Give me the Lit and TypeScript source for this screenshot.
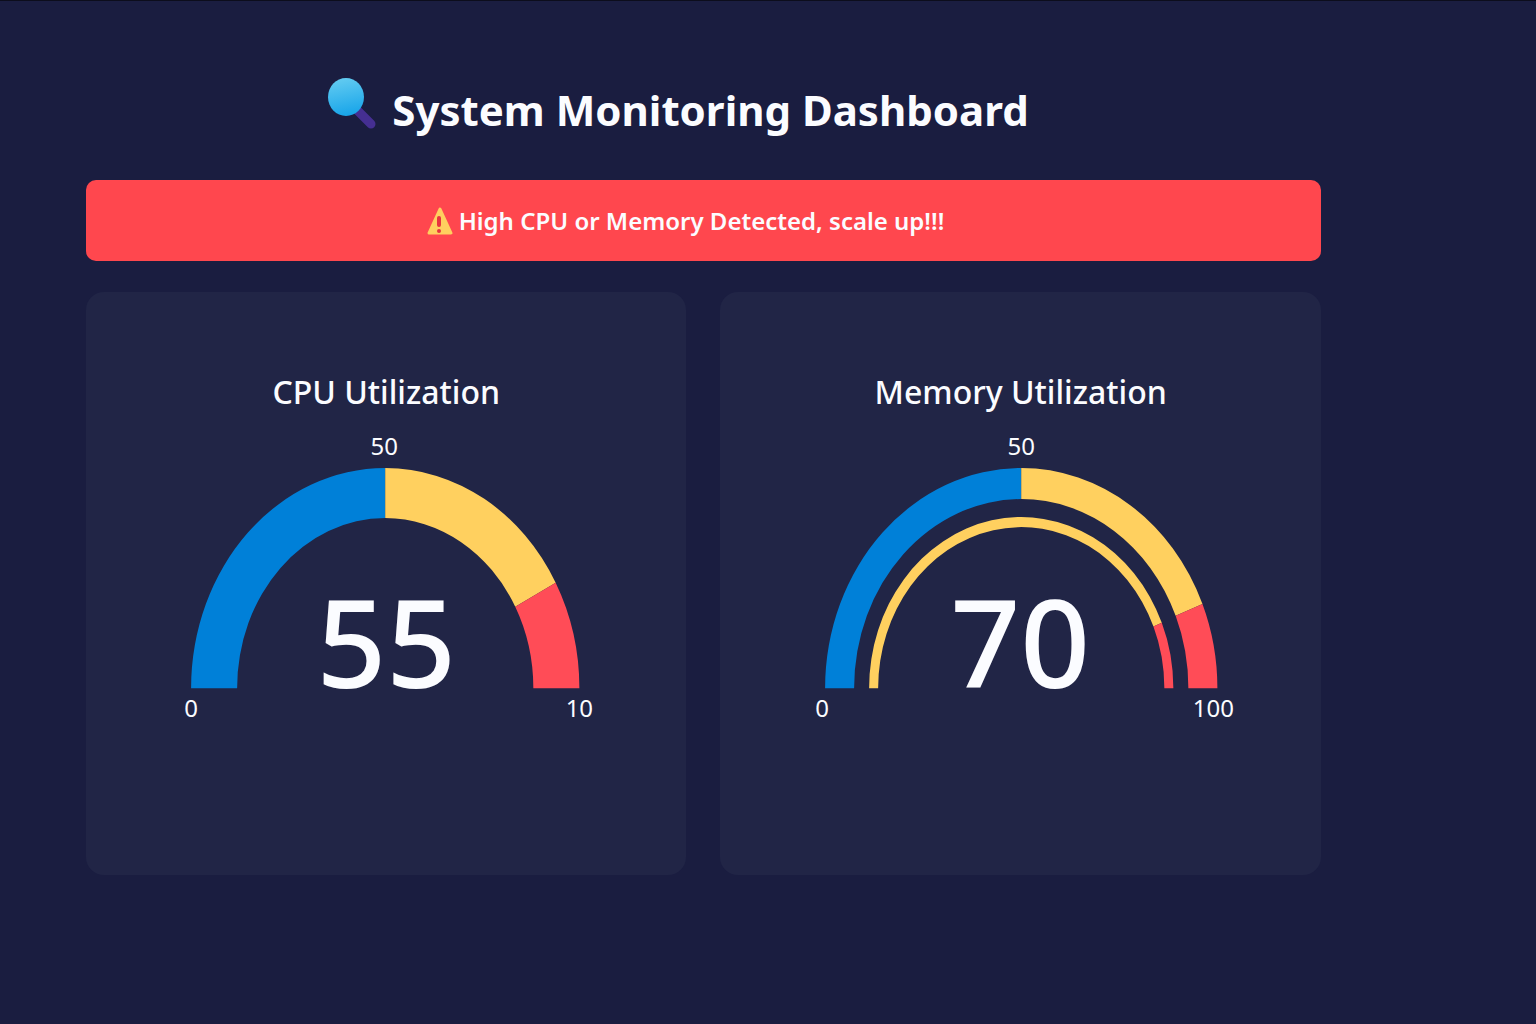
import { LitElement, html, svg, css } from "lit";
import { customElement, property } from "lit/decorators.js";

interface Zone {
  upTo: number;
  tone: "low" | "mid" | "high";
}

interface Ring {
  outer: [number, number];
  inner: [number, number];
  zones: Zone[];
}

interface Label {
  text: string;
  x: number;
  y: number;
}

interface Gauge {
  title: string;
  value: number;
  cx: number;
  rings: Ring[];
  labels: Label[];
}

const BASELINE = 260;

const GAUGES: Gauge[] = [
  {
    title: "CPU Utilization",
    value: 55,
    cx: 299,
    rings: [
      {
        outer: [194, 220],
        inner: [148, 170],
        zones: [
          { upTo: 0.5, tone: "low" },
          { upTo: 0.841, tone: "mid" },
          { upTo: 1, tone: "high" },
        ],
      },
    ],
    labels: [
      { text: "50", x: 298, y: 27 },
      { text: "0", x: 105, y: 289 },
      { text: "10", x: 493, y: 289 },
    ],
  },
  {
    title: "Memory Utilization",
    value: 70,
    cx: 301,
    rings: [
      {
        outer: [196, 220],
        inner: [167, 189],
        zones: [
          { upTo: 0.5, tone: "low" },
          { upTo: 0.875, tone: "mid" },
          { upTo: 1, tone: "high" },
        ],
      },
      {
        outer: [152, 171],
        inner: [143, 161],
        zones: [
          { upTo: 0.875, tone: "mid" },
          { upTo: 1, tone: "high" },
        ],
      },
    ],
    labels: [
      { text: "50", x: 301, y: 27 },
      { text: "0", x: 102, y: 289 },
      { text: "100", x: 493, y: 289 },
    ],
  },
];

/** Point on a half ellipse; 0 is the left end and 1 the right end. */
function pointAt(cx: number, [rx, ry]: [number, number], fraction: number): string {
  const angle = Math.PI * (1 - fraction);
  const x = cx + rx * Math.cos(angle);
  const y = BASELINE - ry * Math.sin(angle);
  return `${x.toFixed(2)} ${y.toFixed(2)}`;
}

function bandPath(cx: number, ring: Ring, from: number, to: number): string {
  const { outer, inner } = ring;
  return [
    `M${pointAt(cx, outer, from)}`,
    `A${outer[0]} ${outer[1]} 0 0 1 ${pointAt(cx, outer, to)}`,
    `L${pointAt(cx, inner, to)}`,
    `A${inner[0]} ${inner[1]} 0 0 0 ${pointAt(cx, inner, from)}`,
    "Z",
  ].join(" ");
}

@customElement("gauge-card")
export class GaugeCard extends LitElement {
  @property({ attribute: false }) gauge!: Gauge;

  static styles = css`
    :host {
      display: block;
      min-width: 0;
    }
    .card {
      box-sizing: border-box;
      height: 100%;
      padding: 76px 0 147px;
      border-radius: 18px;
      background: #212546;
      color: #fbfcff;
    }
    .title {
      margin: 0 0 12px;
      text-align: center;
      font-size: 32px;
      line-height: 48px;
      font-weight: 500;
    }
    .dial {
      display: block;
      width: 100%;
      height: auto;
    }
    .low {
      fill: #0080d8;
    }
    .mid {
      fill: #ffd05f;
    }
    .high {
      fill: #ff4c57;
    }
    .label,
    .value {
      fill: #fbfcff;
      text-anchor: middle;
    }
    .label {
      font-size: 24px;
    }
    .value {
      font-size: 122px;
      font-weight: 500;
    }
  `;

  render() {
    const { title, value, cx, rings, labels } = this.gauge;
    return html`
      <section class="card">
        <h2 class="title">${title}</h2>
        <svg class="dial" viewBox="0 0 600 300" role="img" aria-label="${title}: ${value}">
          ${rings.map((ring) =>
            ring.zones.map((zone, i) => {
              const from = i === 0 ? 0 : ring.zones[i - 1].upTo;
              return svg`<path class=${zone.tone} d=${bandPath(cx, ring, from, zone.upTo)}></path>`;
            }),
          )}
          ${labels.map((l) => svg`<text class="label" x=${l.x} y=${l.y}>${l.text}</text>`)}
          <text class="value" x="300" y=${BASELINE}>${value}</text>
        </svg>
      </section>
    `;
  }
}

@customElement("app-root")
export class AppRoot extends LitElement {
  static styles = css`
    :host {
      display: block;
      box-sizing: border-box;
      min-height: 100vh;
      padding: 72px 14% 72px 5.6%;
      border-top: 1px solid #0c0d1c;
      background: #1a1d40;
      color: #fbfcff;
      font-family: "Noto Sans", "Open Sans", sans-serif;
    }
    .header {
      display: flex;
      justify-content: center;
      align-items: center;
      gap: 16px;
      margin-bottom: 33px;
      padding-right: 50px;
    }
    .lens {
      flex: none;
      width: 48px;
      height: 52px;
      margin-bottom: 12px;
    }
    .heading {
      margin: 0;
      font-size: 42px;
      line-height: 74px;
      font-weight: 700;
    }
    .alert {
      display: flex;
      justify-content: center;
      align-items: center;
      gap: 6px;
      margin-bottom: 31px;
      padding: 22px 36px 21px 0;
      border-radius: 10px;
      background: #ff474e;
      font-size: 24px;
      line-height: 38px;
      font-weight: 600;
    }
    .warning {
      flex: none;
      width: 26px;
      height: 30px;
    }
    .cards {
      display: grid;
      grid-template-columns: 1fr 1fr;
      gap: 34px;
    }
  `;

  render() {
    return html`
      <header class="header">
        <svg class="lens" viewBox="0 0 48 52" aria-hidden="true">
          <defs>
            <linearGradient id="glass" x1="0.4" y1="0" x2="0.6" y2="1">
              <stop offset="0" stop-color="#62cbf1"></stop>
              <stop offset="1" stop-color="#16a4e9"></stop>
            </linearGradient>
          </defs>
          <path d="M29 32 43 46" stroke="#452f92" stroke-width="9" stroke-linecap="round"></path>
          <ellipse cx="18" cy="19" rx="18" ry="19" fill="url(#glass)"></ellipse>
        </svg>
        <h1 class="heading">System Monitoring Dashboard</h1>
      </header>
      <div class="alert" role="alert">
        <svg class="warning" viewBox="0 0 26 30" aria-hidden="true">
          <path d="M13 3 24 27H2Z" fill="#ffcf5f" stroke="#ffcf5f" stroke-width="3" stroke-linejoin="round"></path>
          <path d="M12 12V19" stroke="#e8323f" stroke-width="4" stroke-linecap="round"></path>
          <circle cx="12" cy="25" r="2" fill="#e8323f"></circle>
        </svg>
        <span>High CPU or Memory Detected, scale up!!!</span>
      </div>
      <main class="cards">
        ${GAUGES.map((gauge) => html`<gauge-card .gauge=${gauge}></gauge-card>`)}
      </main>
    `;
  }
}
